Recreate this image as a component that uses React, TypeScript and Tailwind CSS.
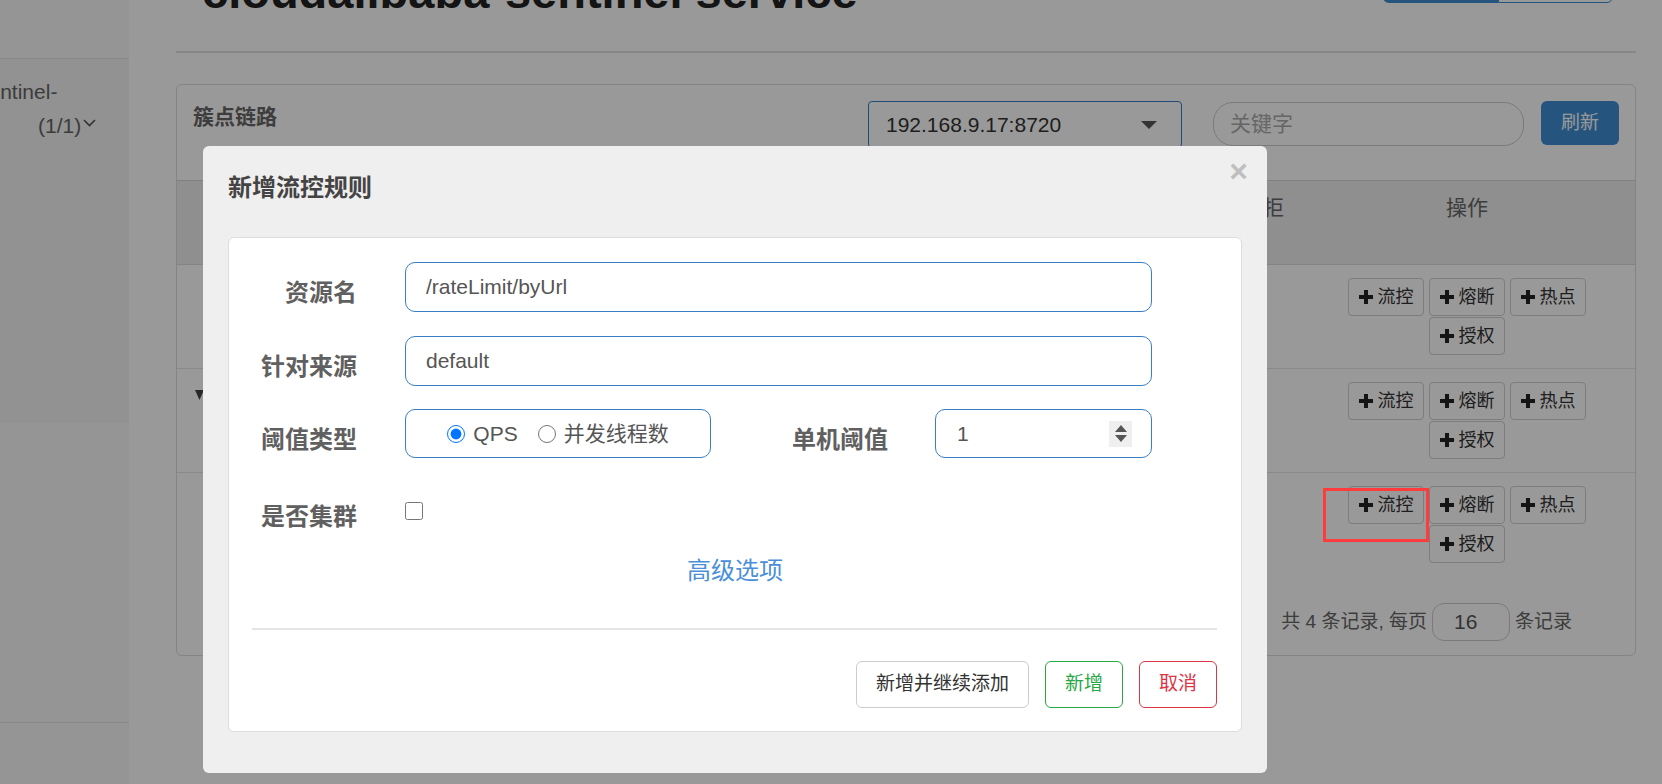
const FONT = "font-['Liberation_Sans','Noto_Sans_CJK_SC',sans-serif]";

function PlusIcon() {
  return (
    <svg width="14" height="14" viewBox="0 0 14 14" className="shrink-0">
      <rect x="0" y="5" width="14" height="4" fill="#222" />
      <rect x="5" y="0" width="4" height="14" fill="#222" />
    </svg>
  );
}

function OpButton({ label }: { label: string }) {
  return (
    <button className="flex h-[38px] w-[76px] items-center justify-center gap-[5px] rounded-[4px] border border-[#d0d0d0] bg-white text-[18px] text-[#333]">
      <PlusIcon />
      <span>{label}</span>
    </button>
  );
}

function OpsCell() {
  return (
    <div className="flex w-[252px] flex-wrap content-start justify-center gap-x-[5px] gap-y-[1px]">
      <OpButton label="流控" />
      <OpButton label="熔断" />
      <OpButton label="热点" />
      <OpButton label="授权" />
    </div>
  );
}

function TableRow({ caret, last }: { caret?: boolean; last?: boolean }) {
  return (
    <div
      className={
        last
          ? "flex h-[104px] pt-[13px]"
          : "flex h-[104px] border-b border-[#e6e6e6] pt-[13px]"
      }
    >
      <div className="flex-1 pl-[18px]">
        {caret && (
          <svg width="9" height="10" viewBox="0 0 9 10" className="mt-[8px]">
            <path d="M0 0 L9 0 L4.5 10 Z" fill="#444" />
          </svg>
        )}
      </div>
      <div className="w-[78px]" />
      <OpsCell />
      <div className="w-[42px]" />
    </div>
  );
}

function Label({ children, w }: { children: string; w: string }) {
  return (
    <label className={`${w} pt-[12px] text-right text-[24px] font-bold leading-[32px] text-[#606060]`}>
      {children}
    </label>
  );
}

function Spinner() {
  return (
    <div className="flex h-[26px] w-[23px] shrink-0 flex-col items-center justify-center gap-[3px] bg-[#efefef]">
      <svg width="12" height="7" viewBox="0 0 12 7">
        <path d="M6 0 L12 7 L0 7 Z" fill="#555" />
      </svg>
      <svg width="12" height="7" viewBox="0 0 12 7">
        <path d="M0 0 L12 0 L6 7 Z" fill="#555" />
      </svg>
    </div>
  );
}

function Modal() {
  return (
    <div className="absolute left-[203px] top-[146px] z-20 flex h-[627px] w-[1064px] flex-col rounded-[6px] bg-[#efefef]">
      <div className="flex h-[91px] items-start justify-between pl-[25px] pr-[19px]">
        <h4 className="pt-[26px] text-[24px] font-bold leading-[32px] text-[#444]">新增流控规则</h4>
        <button className="mt-[9px] text-[32px] font-bold leading-[32px] text-[#bfbfbf]">×</button>
      </div>
      <div className="mx-[25px] h-[495px] rounded-[6px] border border-[#ddd] bg-white pt-[24px]">
        <div className="flex h-[50px] items-center">
          <Label w="w-[128px]">资源名</Label>
          <input
            readOnly
            defaultValue="/rateLimit/byUrl"
            className="ml-[48px] h-[50px] w-[747px] rounded-[10px] border border-[#3c7ec4] px-[20px] text-[21px] text-[#555] outline-none"
          />
        </div>
        <div className="mt-[24px] flex h-[50px] items-center">
          <Label w="w-[128px]">针对来源</Label>
          <input
            readOnly
            defaultValue="default"
            className="ml-[48px] h-[50px] w-[747px] rounded-[10px] border border-[#3c7ec4] px-[20px] text-[21px] text-[#555] outline-none"
          />
        </div>
        <div className="mt-[23px] flex h-[49px] items-center">
          <Label w="w-[128px]">阈值类型</Label>
          <div className="ml-[48px] flex h-[49px] w-[306px] items-center justify-center rounded-[10px] border border-[#3c7ec4] text-[21px] text-[#555]">
            <label className="flex items-center gap-[8px]">
              <input type="radio" name="grade" defaultChecked className="h-[18px] w-[18px]" />
              QPS
            </label>
            <label className="ml-[20px] flex items-center gap-[8px]">
              <input type="radio" name="grade" className="h-[18px] w-[18px]" />
              并发线程数
            </label>
          </div>
          <Label w="w-[177px]">单机阈值</Label>
          <div className="ml-[47px] flex h-[49px] w-[217px] items-center rounded-[10px] border border-[#3c7ec4] pl-[21px] pr-[19px]">
            <input
              readOnly
              defaultValue="1"
              className="min-w-0 flex-1 text-[21px] text-[#555] outline-none"
            />
            <Spinner />
          </div>
        </div>
        <div className="mt-[28px] flex h-[50px] items-center">
          <Label w="w-[128px]">是否集群</Label>
          <input type="checkbox" className="ml-[48px] h-[18px] w-[18px]" />
        </div>
        <div className="mt-[18px] text-center text-[24px] leading-[34px] text-[#4a8fd8]">高级选项</div>
        <div className="ml-[23px] mr-[24px] mt-[40px] h-[2px] bg-[#e5e5e5]" />
        <div className="mt-[31px] flex justify-end gap-[16px] pr-[24px]">
          <button className="h-[47px] rounded-[6px] border border-[#ccc] bg-white px-[19px] text-[19px] text-[#333]">
            新增并继续添加
          </button>
          <button className="h-[47px] w-[78px] rounded-[6px] border border-[#28a745] bg-white text-[19px] text-[#28a745]">
            新增
          </button>
          <button className="h-[47px] w-[78px] rounded-[6px] border border-[#dc3545] bg-white text-[19px] text-[#dc3545]">
            取消
          </button>
        </div>
      </div>
    </div>
  );
}

export default function App() {
  return (
    <div className={`relative flex h-[784px] w-[1662px] overflow-hidden bg-white ${FONT}`}>
      <aside className="flex w-[129px] shrink-0 flex-col bg-[#f8f8f8]">
        <div className="h-[59px] border-b border-[#e4e4e4]" />
        <div className="h-[364px] overflow-hidden bg-[#f3f3f3] pt-[16px] text-[21px] leading-[34px] text-[#646464]">
          <div className="whitespace-nowrap">
            <span className="-ml-[22px]">sentinel-</span>
          </div>
          <div className="flex items-start pl-[38px]">
            <span>(1/1)</span>
            <svg width="13" height="8" viewBox="0 0 13 8" className="ml-[2px] mt-[10px]">
              <polyline points="1,1 6.5,6.5 12,1" fill="none" stroke="#555" strokeWidth="1.6" />
            </svg>
          </div>
        </div>
        <div className="h-[299px]" />
        <div className="border-t border-[#e4e4e4]" />
      </aside>

      <main className="flex min-w-0 flex-1 flex-col pl-[47px] pr-[26px]">
        <div className="-mt-[32px] flex h-[83px] shrink-0 items-start justify-between">
          <h1 className="ml-[26px] whitespace-nowrap text-[47px] font-bold leading-[47px] text-[#222]">
            cloudalibaba-sentinel service
          </h1>
          <div className="-mt-[10px] mr-[23px] flex h-[45px]">
            <div className="w-[115px] rounded-bl-[6px] bg-[#3e8ed3]" />
            <div className="w-[115px] rounded-br-[6px] border border-[#3e8ed3] bg-white" />
          </div>
        </div>
        <div className="h-[2px] shrink-0 bg-[#e2e2e2]" />

        <section className="mt-[31px] rounded-[6px] border border-[#ddd]">
          <div className="flex h-[96px] items-start border-b border-[#d6d6d6] px-[16px] pt-[16px]">
            <div className="mt-[1px] text-[21px] font-bold leading-[30px] text-[#666]">簇点链路</div>
            <div className="flex-1" />
            <div className="flex h-[47px] w-[314px] items-center justify-between rounded-[4px] border border-[#3a7fc4] pl-[17px] pr-[24px] text-[21px] text-[#333]">
              <span>192.168.9.17:8720</span>
              <svg width="16" height="8" viewBox="0 0 16 8">
                <path d="M0 0 L16 0 L8 8 Z" fill="#555" />
              </svg>
            </div>
            <input
              placeholder="关键字"
              className="ml-[31px] mt-[1px] h-[44px] w-[311px] rounded-[20px] border border-[#ccc] px-[16px] text-[21px] outline-none placeholder:text-[#aaa]"
            />
            <button className="ml-[17px] h-[44px] w-[78px] rounded-[6px] bg-[#3e8ed3] text-[19px] text-white">
              刷新
            </button>
          </div>

          <div className="flex h-[84px] border-b border-[#ddd] bg-[#eee] pt-[12px] text-[21px] leading-[30px] text-[#666]">
            <div className="flex-1" />
            <div className="w-[78px]">拒</div>
            <div className="w-[252px] text-center">操作</div>
            <div className="w-[42px]" />
          </div>

          <TableRow />
          <TableRow caret />
          <TableRow last />

          <div className="mb-[14px] mt-[26px] flex h-[38px] items-center justify-end gap-[5px] pr-[63px] text-[19px] text-[#666]">
            <span>共 4 条记录, 每页</span>
            <input
              readOnly
              defaultValue="16"
              className="h-[38px] w-[78px] rounded-[12px] border border-[#ccc] pl-[21px] text-[21px] text-[#555] outline-none"
            />
            <span>条记录</span>
          </div>
        </section>
      </main>

      <div className="absolute inset-0 z-10 bg-black/40" />
      <Modal />
      <div className="absolute left-[1323px] top-[488px] z-30 h-[54px] w-[106px] border-[3px] border-[#ff3b3b]" />
    </div>
  );
}
